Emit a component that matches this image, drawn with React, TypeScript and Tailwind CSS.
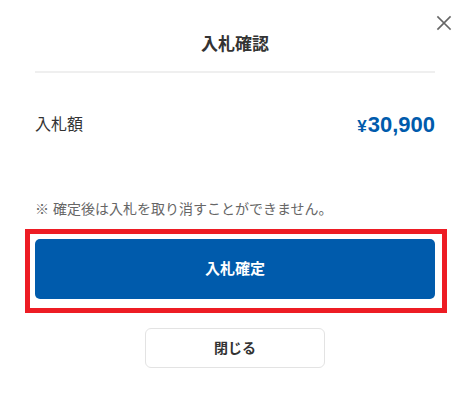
export default function App() {
  return (
    <div
      className="relative flex h-[405px] w-[474px] flex-col bg-white pl-[35px] pr-[39px] text-[#333]"
      style={{ fontFamily: '"Liberation Sans", "Noto Sans CJK JP", sans-serif' }}
    >
      {/* close */}
      <button className="absolute right-[22px] top-[15px] flex h-[16px] w-[16px] items-center justify-center" aria-label="close">
        <svg width="16" height="16" viewBox="0 0 16 16" fill="none" stroke="#666" strokeWidth="1.7" strokeLinecap="square">
          <path d="M2 2 L14 14 M14 2 L2 14" />
        </svg>
      </button>

      <h2 className="mt-[33px] text-center text-[17px] font-bold leading-[24px]">入札確認</h2>
      <div className="mt-[14px] h-[2px] bg-[#efefef]" />

      <div className="mt-[36px] flex h-[32px] items-center justify-between">
        <span className="text-[16px] leading-[24px]">入札額</span>
        <span className="font-bold leading-none text-[#005bac]">
          <span className="mr-[1px] text-[17px]">¥</span>
          <span className="text-[22px]">30,900</span>
        </span>
      </div>

      <p className="mt-[58px] text-[14px] leading-[20px] text-[#666]">※ 確定後は入札を取り消すことができません。</p>

      {/* highlighted area */}
      <div className="mt-[10px] -ml-[10px] -mr-[12px] border-[5px] border-[#ed1c24] pb-[9px] pl-[5px] pr-[7px] pt-[5px]">
        <button className="h-[60px] w-full rounded-[5px] bg-[#005bac] text-[15px] font-bold text-white">
          入札確定
        </button>
      </div>

      <div className="mt-[15px] flex justify-center">
        <button className="h-[40px] w-[180px] rounded-[6px] border border-[#e3e3e3] bg-white text-[14px] font-bold text-[#333]">
          閉じる
        </button>
      </div>
    </div>
  );
}
